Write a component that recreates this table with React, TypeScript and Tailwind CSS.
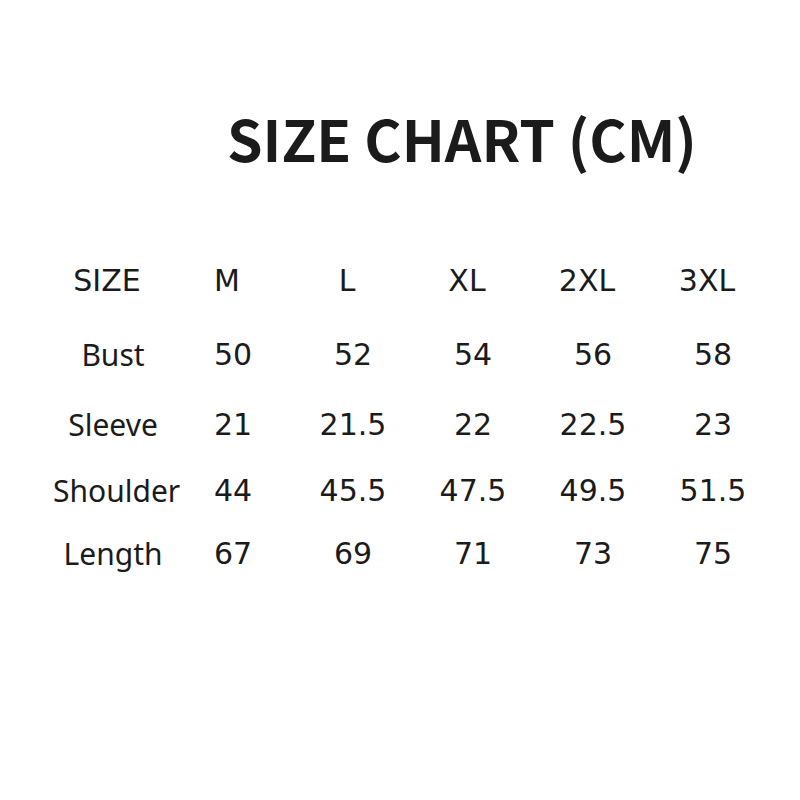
import React from 'react';

const sizes = ['M', 'L', 'XL', '2XL', '3XL'];

const rows: { label: string; values: string[]; h: string }[] = [
  { label: 'Bust', values: ['50', '52', '54', '56', '58'], h: 'h-[72px]' },
  { label: 'Sleeve', values: ['21', '21.5', '22', '22.5', '23'], h: 'h-[68px]' },
  { label: 'Shoulder', values: ['44', '45.5', '47.5', '49.5', '51.5'], h: 'h-[64px]' },
  { label: 'Length', values: ['67', '69', '71', '73', '75'], h: 'h-[62px]' },
];

const App: React.FC = () => {
  return (
    <div className="w-[800px] h-[800px] bg-white text-[#1b1b1b] font-['Noto_Sans',sans-serif]">
      <h1 className="pt-[97px] pl-[227px] text-[57px] leading-[80px] font-bold font-['Noto_Sans_CJK_SC','Noto_Sans',sans-serif]">
        SIZE CHART (CM)
      </h1>

      <div className="mt-[82px] text-[30px] leading-none">
        <div className="ml-[47px] grid grid-cols-[repeat(6,120px)] h-[44px] items-center font-['DejaVu_Sans',sans-serif]">
          <div className="text-center">SIZE</div>
          {sizes.map((s) => (
            <div key={s} className="text-center">{s}</div>
          ))}
        </div>

        <div className="ml-[53px] mt-[16px]">
          {rows.map((r) => (
            <div key={r.label} className={`grid grid-cols-[repeat(6,120px)] items-center ${r.h}`}>
              <div className="text-center">{r.label}</div>
              {r.values.map((v, i) => (
                <div key={i} className="text-center font-['DejaVu_Sans',sans-serif]">{v}</div>
              ))}
            </div>
          ))}
        </div>
      </div>
    </div>
  );
};

export default App;
